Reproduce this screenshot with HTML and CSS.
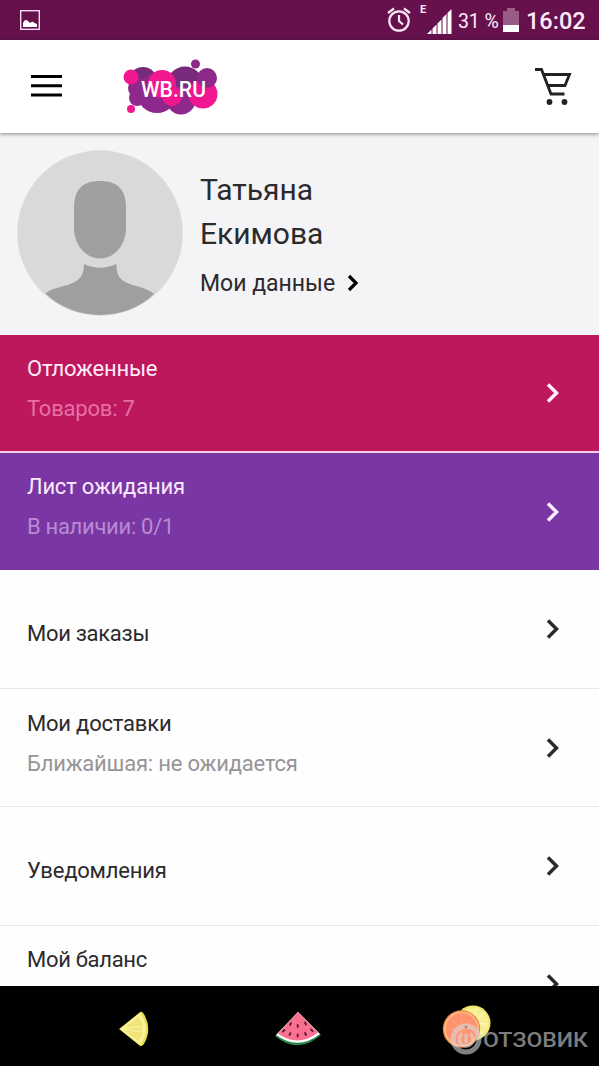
FILE: index.html
```html
<!DOCTYPE html>
<html lang="ru">
<head>
<meta charset="utf-8">
<title>Профиль</title>
<link rel="stylesheet" href="styles.css">
</head>
<body>
<div class="screen">
  <div class="statusbar">
    <svg class="picture-icon" width="20" height="20" viewBox="0 0 20 20"><rect x=".7" y=".7" width="18.6" height="18.6" fill="none" stroke="#f6dcef" stroke-width="1.4"/><path d="M3 17V12.500Q4 12 4.500 10.500Q6.500 9 8.500 11.500L10 13Q12.500 10.500 14.500 13L17 14V17Z" fill="#fff"/></svg>
    <div class="status-right">
      <svg class="alarm" width="24" height="26" viewBox="0 0 24 26" fill="none" stroke="#fbe6f6" stroke-width="2.2"><circle cx="12" cy="14" r="9.700"/><path d="M12 8V14L16 17.500M1 6L7 1.500M17 1.500L23 6"/></svg>
      <span class="net">E</span>
      <svg class="signal" width="25" height="26" viewBox="0 0 25 26" fill="#fff"><path d="M0 26L4.500 21.500V26ZM5.500 20.500L9.500 16.500V26H5.500ZM10.500 15.500L14.500 11.500V26H10.500ZM15.500 10L19.500 6V26H15.500ZM20.500 5L24.500 1V26H20.500Z"/></svg>
      <span class="percent">31 %</span>
      <svg class="battery" width="16" height="24" viewBox="0 0 16 24"><path d="M0 3H4V0H12V3H16V24H0Z" fill="#975c88"/><path d="M0 17H16V24H0Z" fill="#fff"/></svg>
      <span class="clock">16:02</span>
    </div>
  </div>

  <header class="header">
    <svg class="menu" width="31" height="22" viewBox="0 0 31 22"><path d="M0 1.500H31M0 10.700H31M0 19.900H31" stroke="#000" stroke-width="3"/></svg>
    <svg class="logo" width="96" height="58" viewBox="0 0 96 58">
      <g fill="#782a7a"><circle cx="20" cy="23" r="14"/><circle cx="62" cy="27" r="18.500"/></g>
      <g fill="#8e298b"><circle cx="15" cy="30" r="10"/><circle cx="14" cy="40" r="8"/><circle cx="34" cy="35" r="20"/><circle cx="58" cy="42" r="14.500"/><circle cx="72.500" cy="6" r="4.500"/></g>
      <g fill="#f01791"><circle cx="8" cy="19" r="7.500"/><circle cx="8" cy="51" r="4"/><circle cx="39" cy="26" r="14"/><circle cx="49" cy="38" r="10"/><circle cx="80" cy="36" r="14.500"/></g>
      <circle cx="84" cy="20" r="10" fill="#8e298b"/>
      <text x="18" y="38.500" textLength="65" lengthAdjust="spacingAndGlyphs" class="logo-text">WB.RU</text>
    </svg>
    <svg class="cart" width="38" height="40" viewBox="0 0 38 40" fill="none" stroke="#222" stroke-width="2.800"><path d="M1 3.500H7.500L17 28H30.500M9 8.500H35.500L31 19.500H14"/><g fill="#222" stroke="none"><circle cx="15.500" cy="36" r="2.900"/><circle cx="30.500" cy="36" r="2.900"/></g></svg>
  </header>

  <section class="profile">
    <svg class="avatar" width="166" height="166" viewBox="0 0 166 166"><circle cx="83" cy="83" r="82.700" fill="#d9d8da"/><path d="M57 58C57 39 66 31 83 31S109 39 109 58V78C109 94 98 108.500 83 108.500S57 94 57 78Z" fill="#a09ea0"/><path d="M67 114Q83 121.500 99.500 114C99 130 108 133 121 136.500Q132 139.500 137 144C108 172 58 172 28.500 143.500Q33 139 45 136.500C59 133 67 129 67 114Z" fill="#a09ea0"/></svg>
    <div class="person">
      <div class="name">Татьяна<br>Екимова</div>
      <div class="data-link"><span>Мои данные</span><svg class="small-chevron" width="12" height="18" viewBox="0 0 12 18"><path d="M2 2L9 9L2 16"/></svg></div>
    </div>
  </section>

  <main class="list">
    <div class="row deferred"><div class="labels"><div class="title">Отложенные</div><div class="sub">Товаров: 7</div></div><svg class="chevron" width="14" height="20" viewBox="0 0 14 20"><path d="M2 1.500L10.500 10L2 18.500"/></svg></div>
    <div class="row waiting"><div class="labels"><div class="title">Лист ожидания</div><div class="sub narrow">В наличии: 0/1</div></div><svg class="chevron" width="14" height="20" viewBox="0 0 14 20"><path d="M2 1.500L10.500 10L2 18.500"/></svg></div>
    <div class="row plain single orders"><div class="labels"><div class="title narrow">Мои заказы</div></div><svg class="chevron" width="14" height="20" viewBox="0 0 14 20"><path d="M2 1.500L10.500 10L2 18.500"/></svg></div>
    <div class="row plain"><div class="labels"><div class="title">Мои доставки</div><div class="sub">Ближайшая: не ожидается</div></div><svg class="chevron" width="14" height="20" viewBox="0 0 14 20"><path d="M2 1.500L10.500 10L2 18.500"/></svg></div>
    <div class="row plain single"><div class="labels"><div class="title">Уведомления</div></div><svg class="chevron" width="14" height="20" viewBox="0 0 14 20"><path d="M2 1.500L10.500 10L2 18.500"/></svg></div>
    <div class="row plain"><div class="labels"><div class="title narrow">Мой баланс</div><div class="sub">&nbsp;</div></div><svg class="chevron" width="14" height="20" viewBox="0 0 14 20"><path d="M2 1.500L10.500 10L2 18.500"/></svg></div>
  </main>

  <nav class="navbar">
    <svg class="lemon" width="30" height="36" viewBox="0 0 30 36"><path d="M0 18L21.500 .8Q24 .5 25.500 4Q33 18 25.500 32Q24 35.500 21.500 35.200Z" fill="#e9df55"/><path d="M1 18L21 2Q33 18 21 34Z" fill="#faf29b"/><path d="M6 16.500L19 6Q23 9 24 14.500ZM6 19.500L19 30Q23 27 24 21.500ZM7 18L23 15.500V20.500Z" fill="#f0e578"/></svg>
    <svg class="melon" width="46" height="34" viewBox="0 0 46 34"><path d="M23 0L46 23Q23 43 0 24Z" fill="#28864b"/><path d="M23 0L45 22Q23 39 1 23Z" fill="#fff"/><path d="M23 0L43 20.500Q23 36 3 21.500Z" fill="#fb6f91"/><g stroke="#53202e" stroke-width="1.800" stroke-linecap="round"><path d="M16 11L15 13M22.700 13V15M30 10.500L31 12.500M9.500 18L8 19.500M15.500 21L14.500 23M22.700 22.500V24.500M30 21L31 23M36 17.500L37.500 19"/></g></svg>
    <div class="orange-slot">
      <svg class="orange" width="49" height="45" viewBox="0 0 49 45"><circle cx="31" cy="18" r="17.500" fill="#eee969"/><circle cx="31" cy="18" r="15.500" fill="#f6ee91"/><path d="M31 18L42 8M31 18L45 19M31 18L40 30M31 18L34 3" stroke="#fff8ba" stroke-width="1.300"/><circle cx="19.500" cy="24" r="18.700" fill="#e9823f"/><circle cx="19.500" cy="24" r="17.500" fill="#ffc08b"/><circle cx="19.500" cy="24" r="16" fill="#ff936e"/><path d="M19.500 8V40M3.500 24H35.500M8 13L31 35M31 13L8 35" stroke="#ffa481" stroke-width="1"/></svg>
      <div class="watermark"><svg width="32" height="32" viewBox="0 0 32 32" fill="none" stroke="#d6d6dc"><circle cx="16" cy="16" r="13" stroke-width="5"/><path d="M12 10.500A7 7 0 1 0 20 10.500" stroke-width="3.500"/><path d="M16 11V20" stroke-width="3.500"/><circle cx="16" cy="4" r="1" stroke="#666" stroke-width="1"/></svg><svg class="mark-text" width="107" height="28" viewBox="0 0 107 28"><text x="0" y="21" textLength="105" lengthAdjust="spacingAndGlyphs" class="mark-letters">ОТЗОВИК</text></svg></div>
    </div>
  </nav>
</div>
</body>
</html>
```
FILE: styles.css
```css
* { box-sizing: border-box; }
body { margin: 0; background: #fff; font-family: Roboto, "Noto Sans", sans-serif; color: #2b2a2d; }
.screen { width: 599px; height: 1066px; display: flex; flex-direction: column; overflow: hidden; }
svg { display: block; flex: none; }

.statusbar { height: 40px; flex: none; background: #66114c; display: flex; justify-content: space-between; padding: 0 14px 0 20px; color: #fdeafa; }
.picture-icon { margin-top: 10px; }
.status-right { display: flex; align-items: flex-start; white-space: nowrap; }
.alarm { margin-top: 7px; }
.net { font: 700 11px/12px Roboto, sans-serif; margin: 4px 0 0 9px; width: 7px; }
.signal { margin-top: 8px; }
.percent { width: 45px; font-size: 19.500px; line-height: 43px; margin-left: 6px; letter-spacing: -.1px; }
.battery { margin-top: 8px; }
.clock { width: 59px; font-size: 23.500px; font-weight: 500; line-height: 42px; margin-left: 7px; }

.header { height: 93px; flex: none; display: flex; padding: 0 27px 0 31px; background: #fff; position: relative; box-shadow: 0 1px 4px rgba(0,0,0,.45); }
.menu { margin-top: 35px; }
.logo { margin: 18px 0 0 61px; }
.cart { margin: 26px 0 0 auto; }
.logo-text { font: 500 21.500px Roboto, sans-serif; fill: #fff; }

.profile { height: 202px; flex: none; display: flex; background: #f4f3f5; padding: 17px 0 0 17px; }
.person { margin: 18px 0 0 17px; }
.name { font-size: 30px; line-height: 44px; }
.data-link { display: flex; align-items: center; font-size: 23px; line-height: 44px; margin-top: 6px; }
.small-chevron { margin: 0 0 3px 12px; fill: none; stroke: #000; stroke-width: 3.200; }

.list { flex: 1; min-height: 0; overflow: hidden; background: #fefefe; }
.row { height: 118.200px; display: flex; justify-content: space-between; align-items: center; padding: 0 39px 0 27px; font-size: 22px; line-height: 40px; }
.title, .sub { letter-spacing: -.2px; }
.title.narrow, .sub.narrow { letter-spacing: -.3px; }
.chevron { fill: none; stroke: #2a292b; stroke-width: 3.500; }
.labels { margin-bottom: 8px; }
.single .labels { margin: 10px 0 0; }
.plain { border-bottom: 1px solid #e6e5e7; }
.plain .sub { color: #969597; }
.orders { height: 119px; }
.deferred { background: #bd185e; border-bottom: 2px solid #f9cfe5; color: #ffeaf7; }
.deferred .sub { color: #e66fa6; }
.waiting { height: 117px; background: #7a37a3; color: #faeaff; }
.waiting .labels { margin-bottom: 10px; }
.waiting .sub { color: #b98ad4; }
.deferred .chevron, .waiting .chevron { stroke: #ffeefb; }

.navbar { height: 80px; flex: none; background: #000; display: flex; align-items: flex-start; }
.lemon { margin: 25px 0 0 119px; }
.melon { margin: 26px 0 0 126px; }
.orange-slot { position: relative; margin: 19px 0 0 121px; }
.watermark { position: absolute; left: 8px; top: 18px; display: flex; align-items: flex-start; opacity: .6; }
.mark-text { margin: 3px 0 0 1px; }
.mark-letters { font: 500 20px Roboto, sans-serif; fill: #d0d0d6; }
```
